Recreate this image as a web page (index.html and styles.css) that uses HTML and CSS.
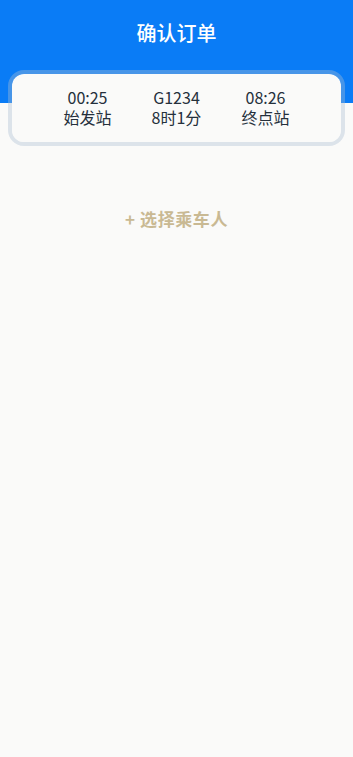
FILE: index.html
```html
<!DOCTYPE html>
<html lang="zh-CN">
<head>
  <meta charset="UTF-8" />
  <meta name="viewport" content="width=device-width, initial-scale=1.0"/>
  <title>确认订单</title>
  <link rel="stylesheet" href="styles.css">
</head>
<body>
  <div class="header">
    <div class="title">确认订单</div>
  </div>
  <div class="trip-card">
    <div class="trip">
      <div class="col">
        <div class="time">00:25</div>
        <div class="label">始发站</div>
      </div>
      <div class="col">
        <div class="time">G1234</div>
        <div class="label">8时1分</div>
      </div>
      <div class="col">
        <div class="time">08:26</div>
        <div class="label">终点站</div>
      </div>
    </div>
  </div>
  <div class="add-passenger">+ 选择乘车人</div>
</body>
</html>
```

FILE: styles.css
```css
* {
  box-sizing: border-box;
}

body {
  margin: 0;
  font-family: 'Noto Sans CJK SC', 'Noto Sans', sans-serif;
  background: #fafaf9;
  min-height: 100vh;
}

.header {
  height: 103px;
  background: #0a7cf6;
  display: flex;
  justify-content: center;
  padding-top: 19px;
}

.title {
  color: #ffffff;
  font-size: 20px;
  font-weight: 500;
  line-height: 28px;
}

.trip-card {
  margin: -33px 8px 0;
  border: 4px solid rgba(170, 190, 210, 0.38);
  border-radius: 16px;
  background-clip: padding-box;
}

.trip {
  background: #fafaf9;
  border-radius: 12px;
  display: flex;
  justify-content: center;
  padding: 13px 0 15px;
}

.col {
  width: 89px;
  text-align: center;
  color: #25303c;
  font-size: 16px;
  line-height: 20px;
}

.add-passenger {
  margin-top: 60px;
  text-align: center;
  color: #c9b993;
  font-size: 17px;
  font-weight: bold;
  letter-spacing: 0.6px;
  line-height: 26px;
}
```
